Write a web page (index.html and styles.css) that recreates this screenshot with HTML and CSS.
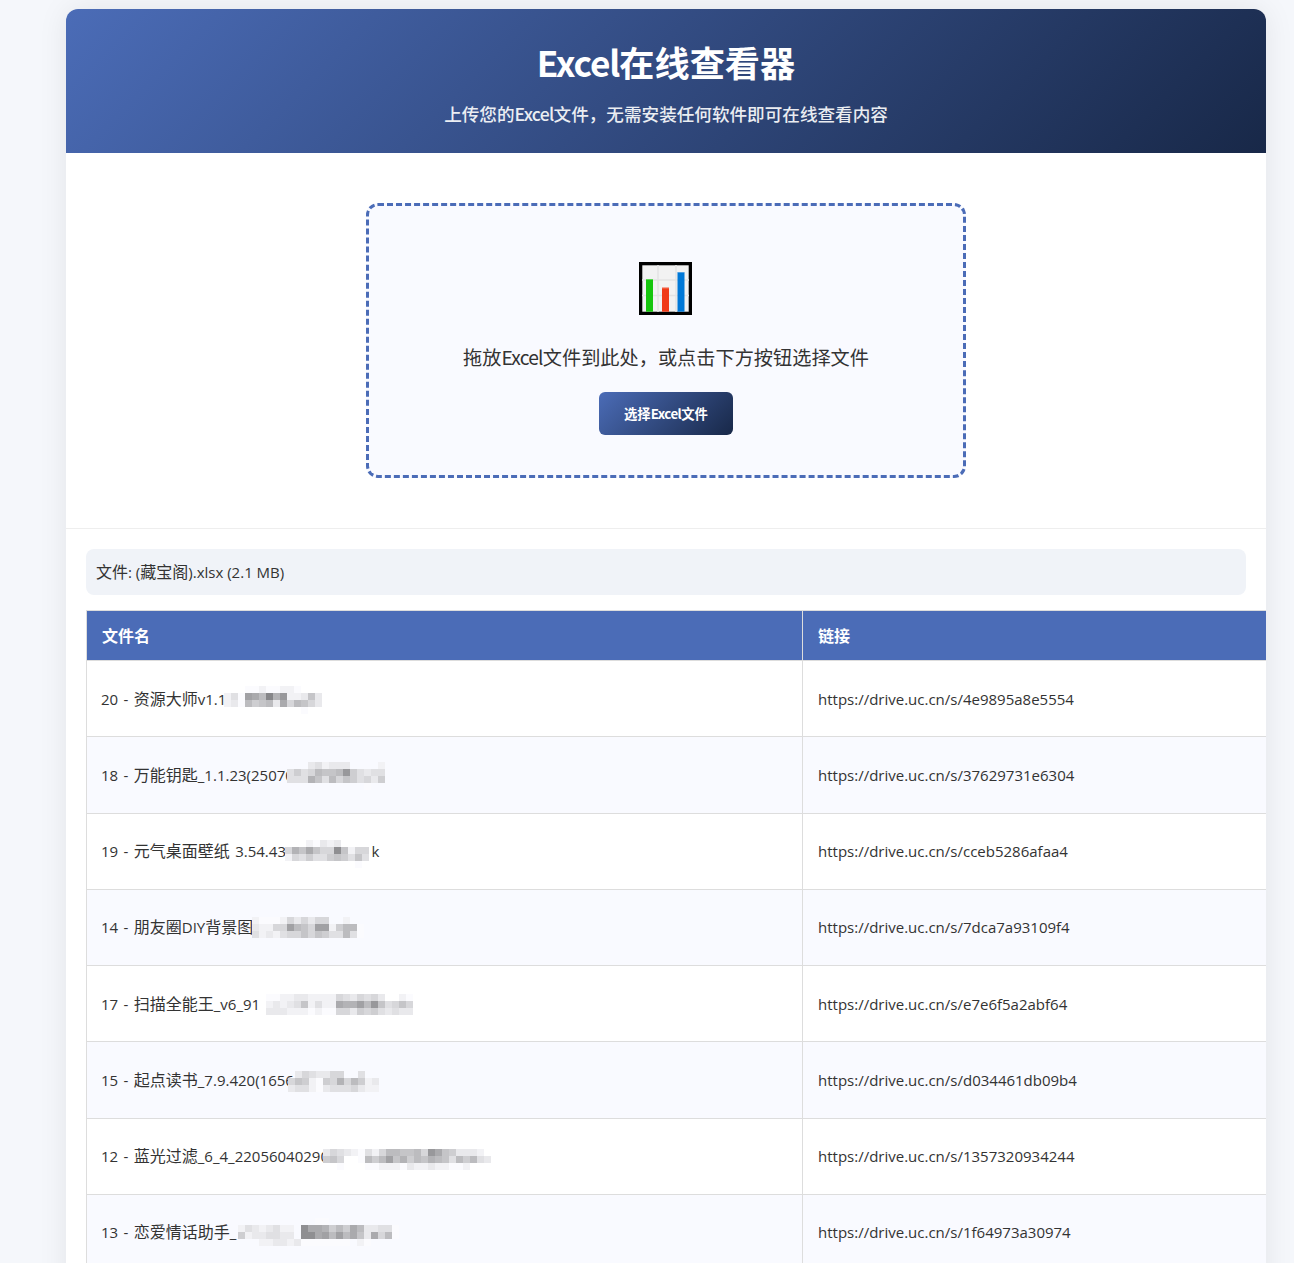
FILE: index.html
```html
<!DOCTYPE html>
<html lang="zh-CN">
<head>
  <meta charset="UTF-8" />
  <title>Excel在线查看器</title>
  <link rel="stylesheet" href="styles.css">
</head>
<body>
  <div class="container">
    <div class="header">
      <h1><span class="latin">Excel</span>在线查看器</h1>
      <p>上传您的<span class="latin">Excel</span>文件，无需安装任何软件即可在线查看内容</p>
    </div>

    <div class="upload-section">
      <div class="drop-zone">
        <svg class="drop-icon" viewBox="0 0 53 53" aria-hidden="true">
          <rect width="53" height="53" fill="#000"/>
          <rect x="3.300" y="3.300" width="46.400" height="46.400" fill="#f2f2f2"/>
          <path d="M19 3v47M37 3v47M3 18h47M3 33.500h47" stroke="#e3e3e3" stroke-width="1.500" fill="none"/>
          <rect x="7" y="17" width="7" height="32.700" fill="#16c60c"/>
          <rect x="23" y="25.500" width="7" height="24.200" fill="#f03a17"/>
          <rect x="38.500" y="10" width="7" height="39.700" fill="#0078d7"/>
          <path d="M7 17.500h7M23 26h7M38.500 10.500h7" stroke="#fff" stroke-opacity="0.300" fill="none"/>
        </svg>
        <p class="drop-text">拖放<span class="latin">Excel</span>文件到此处，或点击下方按钮选择文件</p>
        <button class="file-btn">选择<span class="latin">Excel</span>文件</button>
      </div>
    </div>

    <div class="result-section">
      <div class="file-info"><span class="zh">文件</span>: (<span class="zh">藏宝阁</span>).xlsx (2.1 MB)</div>
      <table class="sheet">
        <thead>
          <tr>
            <th class="col-name">文件名</th>
            <th class="col-link">链接</th>
          </tr>
        </thead>
        <tbody>
          <tr>
            <td>20 - <span class="zh">资源大师</span>v1.1<canvas class="mask" data-x="137" data-y="25" data-cells="...ffeffeef....|ecf5682 74eed9d|edf8a98d6b89bd|...........f.."></canvas></td>
            <td>https://drive.uc.cn/s/4e9895a8e5554</td>
          </tr>
          <tr>
            <td>18 - <span class="zh">万能钥匙</span>_1.1.23(25070<canvas class="mask" data-x="200" data-y="25" data-cells="...dcedd d....e|cacb899 84acdcc|ccc79c8b9acbda|...........f.."></canvas></td>
            <td>https://drive.uc.cn/s/37629731e6304</td>
          </tr>
          <tr>
            <td>19 - <span class="zh">元气桌面壁纸</span> 3.54.43<span class="tail">k</span><canvas class="mask" data-x="198" data-y="26" data-cells="...efded....|b7969b b39ebb|ebcacca9ac9c|..........f."></canvas></td>
            <td>https://drive.uc.cn/s/cceb5286afaa4</td>
          </tr>
          <tr>
            <td>14 - <span class="zh">朋友圈</span>DIY<span class="zh">背景图</span><canvas class="mask" data-x="165" data-y="27" data-cells="efffebdbdbb..e..|deebb589b55ea88f|cedecbb9b9acc8cf"></canvas></td>
            <td>https://drive.uc.cn/s/7dca7a93109f4</td>
          </tr>
          <tr>
            <td>17 - <span class="zh">扫描全能王</span>_v6_91<canvas class="mask" data-x="172" data-y="28" data-cells=".ffeeddeeeebcdbcbd..ef.|.ededc9ecee6775849cb9b.|.dddeeefeffbbdabacdcdd."></canvas></td>
            <td>https://drive.uc.cn/s/e7e6f5a2abf64</td>
          </tr>
          <tr>
            <td>15 - <span class="zh">起点读书</span>_7.9.420(1656<canvas class="mask" data-x="201" data-y="29" data-cells=".dbcddbb..c..|b9aefab7b8aed|dccefdcccbdee"></canvas></td>
            <td>https://drive.uc.cn/s/d034461db09b4</td>
          </tr>
          <tr>
            <td>12 - <span class="zh">蓝光过滤</span>_6_4_22056040290<canvas class="mask" data-x="236" data-y="30" data-cells="dbcdefceb88998b469addde.|a9b..f8a8597a89789c8a8cd|..f...ffeeefdeedeeffe..."></canvas></td>
            <td>https://drive.uc.cn/s/1357320934244</td>
          </tr>
          <tr>
            <td>13 - <span class="zh">恋爱情话助手</span>_<canvas class="mask" data-x="151" data-y="23" data-cells="...........ff..........|ecdedcee.3667a8a68ddccf|aeddccdd.336585869d6b8f|...eeddedfffffff.ef....."></canvas></td>
            <td>https://drive.uc.cn/s/1f64973a30974</td>
          </tr>
        </tbody>
      </table>
    </div>
  </div>
  <script src="script.js"></script>
</body>
</html>
```

FILE: styles.css
```css
html, body {
  height: 100%;
  overflow: hidden;
}
body {
  margin: 0;
  padding: 9px 0 0 66px;
  box-sizing: border-box;
  font-family: "Open Sans", "Noto Sans CJK SC", sans-serif;
  background-color: #f5f7fb;
  color: #333;
}
.container {
  width: 1200px;
  background-color: #fff;
  border-radius: 12px 12px 0 0;
  overflow: hidden;
  box-shadow: 0 0 30px rgba(0,0,0,0.08);
}
.header {
  height: 144px;
  box-sizing: border-box;
  padding-top: 29px;
  background: linear-gradient(135deg, #4b6cb7, #182848);
  color: #fff;
  text-align: center;
}
.header h1 {
  margin: 0 0 16px;
  font-family: "Noto Sans CJK SC", sans-serif;
  font-size: 35.2px;
  line-height: 48px;
}
.header h1 .latin {
  letter-spacing: -0.03em;
}
.header p {
  margin: 0;
  font-family: "Noto Sans CJK SC", sans-serif;
  font-size: 17.6px;
  font-weight: 500;
  line-height: 24px;
  opacity: 0.9;
}
.latin {
  letter-spacing: -0.04em;
}
.upload-section {
  padding: 50px 0;
  border-bottom: 1px solid #eee;
}
.drop-zone {
  width: 600px;
  height: 275px;
  box-sizing: border-box;
  padding-top: 56px;
  margin: 0 auto;
  border: 3px dashed #4b6cb7;
  border-radius: 12px;
  background-color: #f9faff;
  text-align: center;
}
.drop-icon {
  display: block;
  width: 53px;
  height: 53px;
  margin-left: 270px;
}
.drop-text {
  margin: 29px 0 22px;
  font-family: "Noto Sans CJK SC", sans-serif;
  font-size: 19.2px;
  line-height: 26px;
}
.file-btn {
  padding: 12px 25px;
  border: none;
  border-radius: 6px;
  background: linear-gradient(135deg, #4b6cb7, #182848);
  color: #fff;
  font-family: "Noto Sans CJK SC", sans-serif;
  font-weight: bold;
  line-height: 19px;
}
.result-section {
  padding: 20px;
}
.file-info {
  padding: 10px;
  margin-bottom: 15px;
  border-radius: 8px;
  background-color: #f0f3f8;
  font-size: 15px;
  line-height: 26px;
}
.zh {
  font-size: 16px;
}
.sheet {
  table-layout: fixed;
  width: 1300px;
  border-collapse: collapse;
  font-size: 15px;
}
.sheet th,
.sheet td {
  padding: 0 15px;
  border: 1px solid #ddd;
  text-align: left;
}
.sheet th {
  height: 50px;
  padding-bottom: 2px;
  box-sizing: border-box;
  background-color: #4b6cb7;
  color: #fff;
  font-size: 16px;
}
.sheet td {
  position: relative;
  height: 75.25px;
}
.sheet td:first-child {
  padding-left: 14px;
  padding-bottom: 2px;
  box-sizing: border-box;
  height: 76.25px;
  word-spacing: 1.5px;
}
.sheet tbody tr:nth-child(even) {
  background-color: #f9faff;
}
.col-name {
  width: 716px;
}
.tail {
  margin-left: 85.5px;
}
.mask {
  position: absolute;
}
```

FILE: script.js
```js
// draws the blurred part of the file names, one letter per 7px cell
document.querySelectorAll('.mask').forEach(function (canvas) {
  const rows = canvas.dataset.cells.replace(/ /g, '').split('|');
  const size = 7;
  canvas.width = Math.max.apply(null, rows.map(r => r.length)) * size;
  canvas.height = rows.length * size;
  canvas.style.left = canvas.dataset.x + 'px';
  canvas.style.top = canvas.dataset.y + 'px';

  const ctx = canvas.getContext('2d');
  rows.forEach(function (row, y) {
    row.split('').forEach(function (cell, x) {
      if (cell === '.') return;
      const grey = 116 + parseInt(cell, 16) * 9;
      ctx.fillStyle = 'rgb(' + grey + ',' + grey + ',' + (grey + 3) + ')';
      ctx.fillRect(x * size, y * size, size, size);
    });
  });
});
```
